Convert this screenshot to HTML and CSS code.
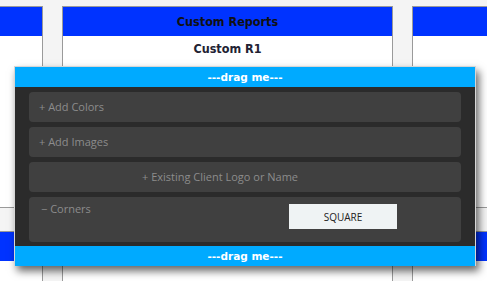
FILE: index.html
```html
<!DOCTYPE html>
<html lang="en">
<head>
    <meta charset="UTF-8">
    <meta name="viewport" content="width=device-width, initial-scale=1.0">
    <title>Custom Reports</title>
    <link rel="stylesheet" href="styles.css">
</head>
<body>
    <div class="board">
        <div class="row">
            <div class="card"><div class="card-head"></div></div>
            <div class="card"><div class="card-head">Custom Reports</div><div class="card-item">Custom R1</div></div>
            <div class="card"><div class="card-head"></div></div>
        </div>
        <div class="row">
            <div class="card"><div class="card-head"></div></div>
            <div class="card"><div class="card-head"></div></div>
            <div class="card"><div class="card-head"></div></div>
        </div>
    </div>

    <div class="modal">
        <div class="drag">---drag me---</div>
        <div class="modal-body">
            <div class="panel">+ Add Colors</div>
            <div class="panel">+ Add Images</div>
            <div class="panel centered">+ Existing Client Logo or Name</div>
            <div class="panel tall">
                <span class="label">&minus; Corners</span>
                <button class="corner-btn">SQUARE</button>
            </div>
        </div>
        <div class="drag">---drag me---</div>
    </div>
</body>
</html>
```

FILE: styles.css
```css
body {
    margin: 0;
    background-color: #f4f4f4;
    font-family: "DejaVu Sans", Verdana, sans-serif;
    overflow: hidden;
}
.board {
    padding-top: 6px;
    margin-left: -288px;
    display: flex;
    flex-direction: column;
    gap: 23px;
}
.row {
    display: flex;
    gap: 19px;
}
.card {
    flex: 0 0 331px;
    height: 202px;
    background-color: #fff;
    border: 1px solid #9a9a9a;
    box-sizing: border-box;
}
.card-head {
    height: 29px;
    background-color: #0033ff;
    color: #111;
    font-weight: bold;
    font-size: 12.5px;
    font-stretch: condensed;
    line-height: 29px;
    text-align: center;
}
.card-item {
    height: 26px;
    line-height: 26px;
    text-align: center;
    font-weight: bold;
    font-size: 12.5px;
    font-stretch: condensed;
    color: #222233;
}

.modal {
    position: absolute;
    left: 14px;
    top: 66px;
    width: 462px;
    height: 200px;
    box-sizing: border-box;
    border: 1px solid #d6d6d6;
    background-color: #2b2b2b;
    box-shadow: 3px 5px 8px rgba(0, 0, 0, 0.6);
    display: flex;
    flex-direction: column;
}
.drag {
    height: 20px;
    line-height: 20px;
    background-color: #00aaff;
    color: #fff;
    font-family: "DejaVu Sans", sans-serif;
    font-weight: bold;
    font-size: 10.5px;
    text-align: center;
}
.modal-body {
    flex: 1;
    padding: 5px 14px 4px 14px;
    display: flex;
    flex-direction: column;
    gap: 5px;
}
.panel {
    height: 30px;
    line-height: 29px;
    padding: 0 10px;
    background-color: #404040;
    border-radius: 4px;
    color: #8c8c8c;
    font-family: "Open Sans", sans-serif;
    font-size: 11px;
}
.centered {
    text-align: center;
    padding-right: 60px;
}
.tall {
    height: 45px;
    display: flex;
    align-items: flex-start;
    line-height: 23px;
}
.label {
    padding-left: 2px;
    width: 248px;
}
.corner-btn {
    margin-top: 7px;
    width: 108px;
    height: 25px;
    border: none;
    background-color: #eff3f4;
    color: #222;
    font-family: "Open Sans", sans-serif;
    font-size: 10px;
    padding: 0;
}
```
